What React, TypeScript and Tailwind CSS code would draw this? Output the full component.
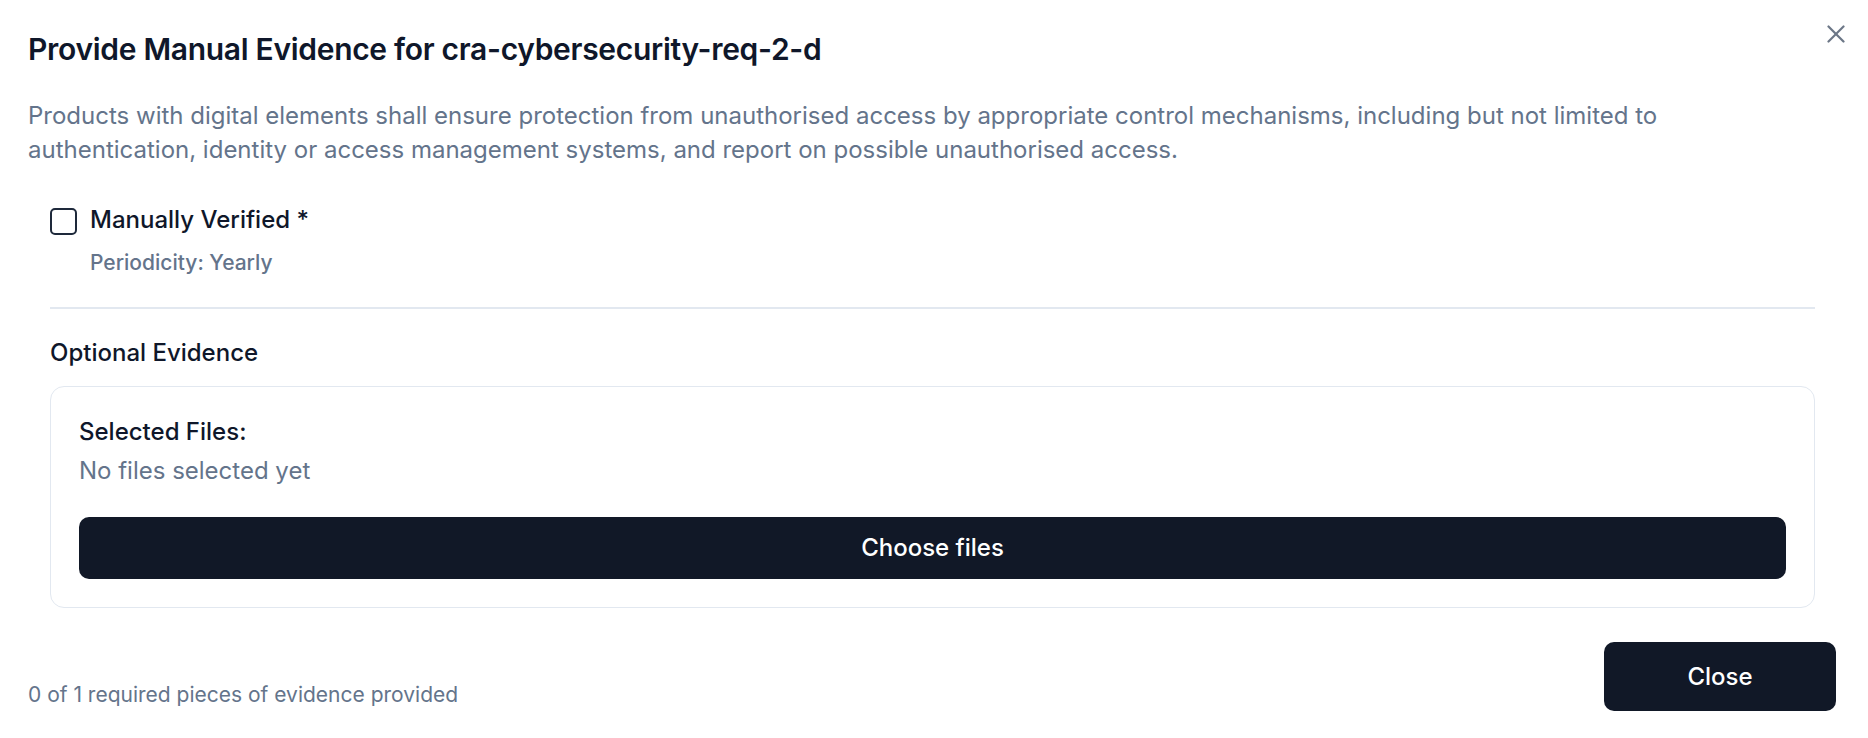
import React from "react";

export default function App() {
  return (
    <div
      className="relative min-h-[738px] w-full bg-white pl-[28px] pr-[32px] pt-[34px] text-[#0f172a]"
      style={{ fontFamily: "Inter, 'Noto Sans', sans-serif" }}
    >
      <button
        type="button"
        aria-label="Close"
        className="absolute right-[23px] top-[25px] h-[18px] w-[18px] text-[#475569] opacity-80"
      >
        <svg viewBox="0 0 18 18" width="18" height="18" fill="none" stroke="currentColor" strokeWidth="2.2" strokeLinecap="round">
          <path d="M1.5 1.5 16.5 16.5" />
          <path d="M16.5 1.5 1.5 16.5" />
        </svg>
      </button>

      <h2 className="text-[30px] font-semibold leading-none tracking-[-0.01em] text-[#0f172a]">
        Provide Manual Evidence for cra-cybersecurity-req-2-d
      </h2>
      <p className="mt-[35px] pr-[60px] text-[24px] leading-[34px] text-[#64748b]">
        Products with digital elements shall ensure protection from unauthorised access by appropriate control mechanisms, including but not limited to authentication, identity or access management systems, and report on possible unauthorised access.
      </p>

      <div className="mt-[41px] pl-[22px] pr-[21px]">
        <div className="flex items-start gap-[13px]">
          <div className="h-[27px] w-[27px] shrink-0 rounded-[5px] border-2 border-[#1e293b] bg-white" />
          <div className="flex flex-col">
            <label className="text-[24px] font-medium leading-none text-[#0f172a]">Manually Verified *</label>
            <div className="mt-[17px] text-[21px] font-medium leading-[28px] text-[#64748b]">Periodicity: Yearly</div>
          </div>
        </div>

        <div className="mt-[30px] h-[2px] w-full bg-[#e2e8f0]" />

        <div className="mt-[32px] text-[24px] font-medium leading-none text-[#0f172a]">Optional Evidence</div>

        <div className="mt-[21px] rounded-[14px] border border-[#e2e8f0] px-[28px] pb-[28px] pt-[28px]">
          <div className="flex flex-col gap-[5px]">
            <div className="text-[24px] font-medium leading-[34px] text-[#0f172a]">Selected Files:</div>
            <div className="text-[24px] leading-[34px] text-[#64748b]">No files selected yet</div>
          </div>
          <button
            type="button"
            className="mt-[29px] flex h-[62px] w-full items-center justify-center rounded-[10px] bg-[#111827] text-[24px] font-medium text-white"
          >
            Choose files
          </button>
        </div>
      </div>

      <div className="mt-[34px] flex items-end justify-between pb-[27px]">
        <div className="pb-[2px] text-[21px] leading-[28px] text-[#64748b]">0 of 1 required pieces of evidence provided</div>
        <button
          type="button"
          className="flex h-[69px] w-[232px] items-center justify-center rounded-[10px] bg-[#111827] text-[24px] font-medium text-white"
        >
          Close
        </button>
      </div>
    </div>
  );
}
